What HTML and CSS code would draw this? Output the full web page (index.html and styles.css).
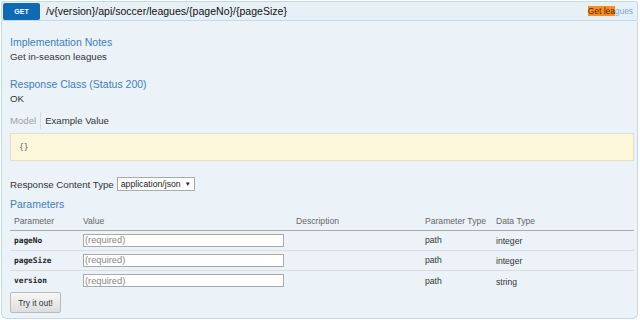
FILE: index.html
```html
<!DOCTYPE html>
<html>

<head>

	<title>GET /v{version}/api/soccer/leagues/{pageNo}/{pageSize}</title>

	<link rel="stylesheet" href="styles.css">
</head>

<body>

	<div class="operation">

		<div class="heading">
			<span class="http-method">GET</span>
			<span class="path">/v{version}/api/soccer/leagues/{pageNo}/{pageSize}</span>
			<span class="summary"><mark>Get lea</mark>gues</span>
		</div>

		<div class="content">

			<h4 class="first">Implementation Notes</h4>
			<p class="notes">Get in-season leagues</p>

			<h4 class="section">Response Class (Status 200)</h4>
			<p class="notes">OK</p>

			<div class="tabs">
				<span class="tab muted">Model</span>
				<span class="tab active">Example Value</span>
			</div>

			<div class="snippet">
				<code>{}</code>
			</div>

			<div class="content-type">
				<span>Response Content Type</span>
				<span class="select">application/json <span class="arrow">&#9660;</span></span>
			</div>

			<h4 class="params-title">Parameters</h4>

			<table class="params">
				<thead>
					<tr>
						<th class="col-name">Parameter</th>
						<th class="col-value">Value</th>
						<th class="col-desc">Description</th>
						<th class="col-ptype">Parameter Type</th>
						<th class="col-dtype">Data Type</th>
					</tr>
				</thead>
				<tbody>
					<tr>
						<td class="code">pageNo</td>
						<td><input type="text" class="param-input" placeholder="(required)"/></td>
						<td></td>
						<td>path</td>
						<td class="dtype">integer</td>
					</tr>
					<tr>
						<td class="code">pageSize</td>
						<td><input type="text" class="param-input" placeholder="(required)"/></td>
						<td></td>
						<td>path</td>
						<td class="dtype">integer</td>
					</tr>
					<tr class="last">
						<td class="code">version</td>
						<td><input type="text" class="param-input" placeholder="(required)"/></td>
						<td></td>
						<td>path</td>
						<td class="dtype">string</td>
					</tr>
				</tbody>
			</table>

			<div class="sandbox">
				<button class="submit">Try it out!</button>
			</div>

		</div>

	</div>

</body>

</html>
```

FILE: styles.css
```css
* {
	box-sizing: border-box;
}

html, body {
	margin: 0;
	background: #fff;
	font-family: 'Liberation Sans', Arial, sans-serif;
	font-size: 9.7px;
	color: #333;
}

.operation {
	margin: 1px 2px 0 1px;
}

/* Heading bar */
.heading {
	display: flex;
	align-items: center;
	height: 20px;
	background-color: #e7f0f7;
	border: 1px solid #c3d9ec;
	border-radius: 2px;
	padding: 0 4px 0 1px;
}

.http-method {
	display: inline-block;
	width: 37px;
	height: 17px;
	line-height: 17px;
	background-color: #0f6ab4;
	color: #fff;
	font-size: 7px;
	font-weight: bold;
	text-align: center;
	border-radius: 2px;
}

.path {
	margin-left: 6px;
	font-size: 10.55px;
	color: #111;
	flex: 1;
}

.summary {
	font-size: 8.4px;
	color: #7fa4cf;
}

.summary mark {
	background: #ff8c1a;
	color: #3a2a20;
}

/* Content */
.content {
	background-color: #ebf3f9;
	border: 1px solid #c3d9ec;
	border-top: 0;
	border-radius: 0 0 6px 6px;
	padding: 0 3px 5px 8px;
}

h4 {
	margin: 0;
	font-size: 10.5px;
	font-weight: normal;
	line-height: 15px;
	color: #3f7dbf;
}

h4.first {
	padding-top: 14px;
}

h4.section {
	margin-top: 13px;
}

.notes {
	margin: 0;
	line-height: 14px;
}

.tabs {
	display: flex;
	margin-top: 6px;
	line-height: 17px;
	font-size: 9.6px;
}

.tab {
	padding-right: 4px;
}

.tab.muted {
	color: #a0a0a0;
	border-right: 1px solid #ddd;
}

.tab.active {
	padding-left: 4px;
	color: #333;
}

.snippet {
	margin-top: 4px;
	height: 28px;
	background-color: #fcf6db;
	border: 1px solid #e5e0c6;
	padding: 0 8px;
	display: flex;
	align-items: center;
}

.snippet code {
	font-family: 'DejaVu Sans Mono', monospace;
	font-size: 8px;
	color: #666;
}

.content-type {
	display: flex;
	align-items: center;
	margin-top: 15px;
	height: 16px;
}

.select {
	margin-left: 3px;
	display: inline-flex;
	align-items: center;
	height: 14px;
	padding: 0 3px;
	border: 1px solid #aaa;
	background: #fff;
	font-size: 8.7px;
	color: #222;
}

.arrow {
	font-size: 6px;
	margin-left: 4px;
}

h4.params-title {
	margin-top: 5px;
}

/* Parameters table */
.params {
	width: 100%;
	border-collapse: collapse;
	margin-top: 1px;
}

.params th {
	text-align: left;
	font-weight: normal;
	color: #666;
	font-size: 8.6px;
	height: 17px;
	padding: 0 4px;
	border-bottom: 1px solid #aaa;
	white-space: nowrap;
}

.params td {
	height: 20px;
	padding: 0 4px;
	border-bottom: 1px solid #ddd;
	vertical-align: middle;
	font-size: 8.6px;
	color: #333;
}

.params tr.last td {
	border-bottom: 0;
	height: 21px;
}

.col-name {
	width: 69px;
}

.col-value {
	width: 213px;
}

.col-desc {
	width: 129px;
}

.col-ptype {
	width: 71px;
}

.params td.code {
	font-family: 'DejaVu Sans Mono', monospace;
	font-size: 7.8px;
	font-weight: bold;
	color: #222;
}

.params td.dtype {
	padding-top: 2px;
}

.param-input {
	display: block;
	width: 201px;
	height: 13px;
	padding: 0 1px;
	border: 1px solid #aaa;
	background: #fff;
	font-family: 'Liberation Sans', Arial, sans-serif;
	font-size: 9.3px;
}

.param-input::placeholder {
	color: #888;
}

/* Try it out */
.sandbox {
	padding-top: 1px;
}

.submit {
	width: 51px;
	height: 21px;
	padding: 0;
	font-family: 'Liberation Sans', Arial, sans-serif;
	font-size: 8.4px;
	color: #333;
	border: 1px solid #bbb;
	border-radius: 2px;
	background: linear-gradient(#f8f8f8, #dcdcdc);
}
```
